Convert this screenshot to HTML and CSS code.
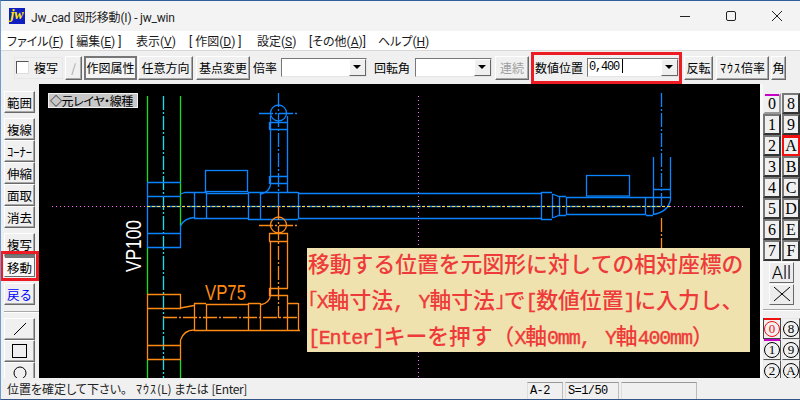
FILE: index.html
```html
<!DOCTYPE html>
<html lang="ja">
<head>
    <meta charset="UTF-8">
    <title>Jw_cad 図形移動(I) - jw_win</title>
    <link rel="stylesheet" href="styles.css">
</head>
<body>
    <div class="window">
        <div class="titlebar">
            <span class="app-icon">jw</span>
            <span class="title-text">Jw_cad 図形移動(I) - jw_win</span>
            <div class="win-controls">
                <svg width="10" height="10" viewBox="0 0 10 10"><path d="M0 5.5H10" stroke="#222" fill="none"/></svg>
                <svg width="10" height="10" viewBox="0 0 10 10"><rect x=".5" y=".5" width="9" height="9" rx="1.5" stroke="#222" fill="none"/></svg>
                <svg width="10" height="10" viewBox="0 0 10 10"><path d="M0 0L10 10M10 0L0 10" stroke="#222" fill="none"/></svg>
            </div>
        </div>

        <div class="menubar">
            <span class="menu m1">ファイル(<u>F</u>)</span>
            <span class="menu m2">[ 編集(<u>E</u>) ]</span>
            <span class="menu m3">表示(<u>V</u>)</span>
            <span class="menu m4">[ 作図(<u>D</u>) ]</span>
            <span class="menu m5">設定(<u>S</u>)</span>
            <span class="menu m6">[その他(<u>A</u>)]</span>
            <span class="menu m7">ヘルプ(<u>H</u>)</span>
        </div>

        <div class="toolbar">
            <label class="check-group"><span class="checkbox"></span>複写</label>
            <button class="btn slash">/</button>
            <button class="btn active w-attr">作図属性</button>
            <button class="btn w-free">任意方向</button>
            <button class="btn w-base">基点変更</button>
            <span class="tool-label l-scale">倍率</span>
            <div class="combo c-scale"><span class="combo-value"></span><span class="combo-arrow"></span></div>
            <span class="tool-label l-rot">回転角</span>
            <div class="combo c-rot"><span class="combo-value"></span><span class="combo-arrow"></span></div>
            <button class="btn disabled w-cont">連続</button>
            <div class="highlight-group">
                <span class="tool-label">数値位置</span>
                <div class="combo c-num"><span class="combo-value">0,400<i class="caret"></i></span><span class="combo-arrow"></span></div>
            </div>
            <button class="btn w-flip">反転</button>
            <button class="btn w-mouse"><span class="kana">ﾏｳｽ</span>倍率</button>
            <button class="btn w-angle">角</button>
        </div>

        <div class="main">
            <div class="left-panel">
                <button class="side-btn">範囲</button>
                <div class="side-group">
                    <button class="side-btn">複線</button>
                    <button class="side-btn">ｺｰﾅｰ</button>
                    <button class="side-btn">伸縮</button>
                    <button class="side-btn">面取</button>
                    <button class="side-btn">消去</button>
                </div>
                <div class="side-group">
                    <button class="side-btn">複写</button>
                    <button class="side-btn current">移動</button>
                </div>
                <button class="side-btn back">戻る</button>
                <div class="side-sep"></div>
                <div class="side-group">
                    <button class="side-btn"><svg width="14" height="14" viewBox="0 0 14 14"><path d="M1 13L13 1" stroke="#000" fill="none"/></svg></button>
                    <button class="side-btn"><svg width="15" height="14" viewBox="0 0 15 14"><rect x=".5" y=".5" width="14" height="13" stroke="#000" fill="none"/></svg></button>
                    <button class="side-btn"><svg width="14" height="14" viewBox="0 0 14 14"><circle cx="7" cy="7" r="6" stroke="#000" fill="none"/></svg></button>
                </div>
            </div>

            <div class="canvas">
                <svg class="drawing" width="721" height="294" viewBox="39 84 721 294" fill="none">
                    <path class="dots" d="M52 206.5H147M670 206.5H746M418.5 96V378"/>
                    <path class="green" d="M147.5 96V182M180.5 96V226M147.5 247V294M147.5 359V378M180.5 359V378"/>
                    <path class="cyan" d="M163.5 96V378"/>

                    <!-- blue pipe -->
                    <g class="blue">
                        <path d="M147.5 182V247M180.5 226V247M147 182.5H181M147 196.5H181M147 233.5H181M147 247.5H181"/>
                        <path d="M180.5 194L185 192.5H194M180.5 226Q184 218 195 217.5M260 194.5Q270 192 270.5 184"/>
                        <path d="M194.5 192V219M194 192.5H206M194 218.5H206M206.5 192V219M206 193.5H248M206 218.5H248M248.5 192V219"/>
                        <path d="M248 192.5H260M248 219.5H260M260.5 192V219M260 192.5H298M260 219.5H298M287.5 184V193M298.5 192V219"/>
                        <path d="M298 193.5H541M298 218.5H541M541.5 192V219M541 192.5H552M541 219.5H552M552.5 194V218"/>
                        <path d="M552.5 194L559 196.5H566M552.5 218L559 215.5H566"/>
                        <path d="M559.5 196V216M566.5 197V215M566 197.5H653M566 214.5H646M645.5 197V215M646 215.5H653M653.5 157V215M670.5 157V197M653 189.5H671M653 197.5H671"/>
                        <path d="M670.5 197V200Q668 212 653 214.5"/>
                        <rect x="205.5" y="170.5" width="42" height="21"/>
                        <rect x="586.5" y="175.5" width="43" height="20.5"/>
                        <path d="M270.5 116V184M287.5 116V184M270 122.5H288M270 129.5H288M270 176.5H288M270 183.5H288M269.5 122V130M269.5 176V184"/>
                        <circle cx="278.5" cy="113" r="8"/>
                        <path class="center" d="M259 113.5H299M278.5 93V206M661.5 93V206M147 206.5H670"/>
                    </g>
                    <path class="center-yb" d="M147 206.5H670"/>

                    <!-- orange pipe -->
                    <g class="orange">
                        <path d="M147.5 294V359M180.5 294V308M180.5 340V359M147 294.5H181M147 308.5H181M147 345.5H181M147 359.5H181"/>
                        <path d="M180.5 308L194 305.5M180.5 340Q184 330 194 330M270.5 295Q270 303 260 305"/>
                        <path d="M194 303.5H206M194.5 303V330M206.5 304V330M206 304.5H248M248.5 303V330M248 303.5H260M260.5 303V330M194 330.5H300M287.5 295V330M287 303.5H298M298.5 303V330"/>
                        <path d="M270.5 241V295M287.5 241V288M269 288.5H288M269 295.5H288M269.5 288V296M269.5 233V241M287.5 233V241M269 233.5H288M269 241.5H288"/>
                        <circle cx="278.5" cy="225" r="8"/>
                        <path class="center" d="M259 225.5H299M278.5 206V318M163 317.5H297M661.5 218V248"/>
                    </g>

                    <text class="vp100" transform="translate(141 272) rotate(-90)" textLength="52" lengthAdjust="spacingAndGlyphs">VP100</text>
                    <text class="vp75" x="205" y="300" textLength="41" lengthAdjust="spacingAndGlyphs">VP75</text>
                </svg>

                <div class="layer-tag">◇元レイヤ・線種</div>
                <div class="note">
                    <div class="note-line">移動する位置を元図形に対しての相対座標の</div>
                    <div class="note-line"><span class="lat">｢X</span>軸寸法<span class="lat">, Y</span>軸寸法<span class="lat">｣</span>で<span class="lat">[</span>数値位置<span class="lat">]</span>に入力し、</div>
                    <div class="note-line"><span class="lat">[Enter]</span>キーを押す（<span class="lat">X</span>軸<span class="lat">0mm, Y</span>軸<span class="lat">400mm</span>）</div>
                </div>
            </div>

            <div class="right-panel">
                <div class="key-grid">
                    <button class="key bar-purple">0</button><button class="key">8</button>
                    <button class="key">1</button><button class="key">9</button>
                    <button class="key">2</button><button class="key key-on">A</button>
                    <button class="key">3</button><button class="key">B</button>
                    <button class="key">4</button><button class="key">C</button>
                    <button class="key">5</button><button class="key">D</button>
                    <button class="key">6</button><button class="key">E</button>
                    <button class="key">7</button><button class="key">F</button>
                </div>
                <button class="all-btn">All</button>
                <button class="all-btn"><svg width="16" height="14" viewBox="0 0 16 14"><path d="M0 0L8 7L0 14M16 0L8 7L16 14" stroke="#000" fill="none"/></svg></button>
                <div class="side-sep"></div>
                <div class="key-grid">
                    <button class="key round bar-red red-mark"><span class="ring">0</span></button><button class="key round"><span class="ring">8</span></button>
                    <button class="key round bar-purple"><span class="ring">1</span></button><button class="key round"><span class="ring">9</span></button>
                    <button class="key round"><span class="ring">2</span></button><button class="key round"><span class="ring">A</span></button>
                </div>
            </div>
        </div>

        <div class="statusbar">
            <span class="status-text">位置を確定して下さい。<span class="kana status-kana">ﾏｳｽ</span>(L) または <span class="status-key">[Enter]</span></span>
            <span class="status-cell s-layer">A-2</span>
            <span class="status-cell s-scale">S=1/50</span>
            <span class="status-cell s-blank"></span>
        </div>
    </div>
</body>
</html>
```

FILE: styles.css
```css
* { box-sizing: border-box; }

html, body {
    margin: 0;
    height: 400px;
    overflow: hidden;
}

body {
    font-family: "Noto Sans CJK JP", "Noto Sans", sans-serif;
    font-size: 12px;
    color: #000;
    background: #f0f0f0;
}

button {
    font: inherit;
    margin: 0;
    padding: 0;
    color: inherit;
}

.window {
    width: 800px;
    height: 400px;
    display: flex;
    flex-direction: column;
    border-top: 1px solid #2f5f9e;
    border-left: 1px solid #6f9bd0;
    border-bottom: 1px solid #34558a;
}

/* title bar */
.titlebar {
    height: 30px;
    flex: none;
    display: flex;
    align-items: center;
    background: #f3f3f3;
    padding-left: 8px;
}
.app-icon {
    width: 16px;
    height: 16px;
    background: #1020c0;
    color: #ffe800;
    font: italic bold 14px/14px "Liberation Serif", serif;
    text-align: center;
}
.title-text {
    margin-left: 6px;
    font-family: Roboto, "Noto Sans CJK JP", sans-serif;
    font-size: 12px;
    letter-spacing: -.2px;
    color: #222;
    white-space: nowrap;
}
.win-controls {
    margin-left: auto;
    display: flex;
    gap: 36px;
    padding-right: 18px;
}

/* menu */
.menubar {
    height: 19px;
    flex: none;
    display: flex;
    align-items: center;
    background: #fff;
    white-space: nowrap;
}
.menu {
    color: #1a1a1a;
    font-family: Roboto, "Noto Sans CJK JP", sans-serif;
    font-feature-settings: "palt";
}
.m1 { margin-left: 6px; width: 63px; }
.m2 { width: 66px; }
.m3 { width: 53px; }
.m4 { width: 68px; }
.m5 { width: 52px; }
.m6 { width: 69px; }

/* toolbar */
.toolbar {
    height: 34px;
    flex: none;
    display: flex;
    align-items: center;
    border-top: 1px solid #d8d8d8;
    background: #f0f0f0;
    white-space: nowrap;
}
.check-group {
    width: 49px;
    height: 22px;
    margin-left: 13px;
    display: flex;
    align-items: center;
    border: 1px solid #e6e6e6;
    padding-left: 1px;
}
.checkbox {
    width: 13px;
    height: 13px;
    margin-right: 5px;
    background: #fff;
    border: 1px solid #555;
    border-right-color: #ddd;
    border-bottom-color: #ddd;
}
.btn {
    height: 24px;
    flex: none;
    background: #f0f0f0;
    border: 1px solid;
    border-color: #fff #696969 #696969 #fff;
    box-shadow: inset -1px -1px #a8a8a8;
    text-align: center;
}
.btn.active {
    border: 2px solid #777;
    background: #f4f4f4;
    box-shadow: none;
}
.btn.disabled, .slash { color: #a0a0a0; }
.slash { width: 17px; margin-left: 2px; }
.w-attr { width: 53px; margin-left: 2px; }
.w-free { width: 55px; margin-left: 1px; }
.w-base { width: 54px; margin-left: 3px; }
.tool-label { flex: none; }
.l-scale { margin-left: 3px; }
.l-rot { margin-left: 7px; }
.combo {
    height: 19px;
    flex: none;
    display: flex;
    justify-content: space-between;
    background: #fff;
    border: 1px solid;
    border-color: #777 #e4e4e4 #e4e4e4 #777;
}
.c-scale { width: 86px; margin-left: 4px; }
.c-rot { width: 77px; margin-left: 5px; }
.c-num { width: 92px; margin-left: 4px; }
.combo-value {
    font: 12px/17px "Liberation Mono", monospace;
    padding-left: 1px;
    letter-spacing: -1.2px;
}
.caret {
    display: inline-block;
    width: 1px;
    height: 14px;
    margin-left: 3px;
    background: #000;
    vertical-align: -3px;
}
.combo-arrow {
    width: 17px;
    position: relative;
    background: #f0f0f0;
    border: 1px solid;
    border-color: #fff #666 #666 #fff;
}
.combo-arrow::after {
    content: "";
    position: absolute;
    left: 3px;
    top: 5px;
    border: 4px solid transparent;
    border-top: 4px solid #000;
    border-bottom: 0;
}
.w-cont { width: 34px; margin-left: 3px; }
.highlight-group {
    width: 151px;
    height: 32px;
    margin-left: 2px;
    flex: none;
    display: flex;
    align-items: center;
    padding-left: 1px;
    border: 3px solid #ed1c24;
}
.w-flip { width: 29px; margin-left: 2px; }
.w-mouse { width: 53px; margin-left: 3px; }
.w-angle { width: 15px; margin-left: 2px; }
.kana { letter-spacing: 1px; }

/* main area */
.main {
    flex: 1;
    min-height: 0;
    display: flex;
    overflow: hidden;
}

.left-panel {
    width: 38px;
    flex: none;
    display: flex;
    flex-direction: column;
    padding: 7px 0 0 3px;
    gap: 5px;
    overflow: hidden;
}
.side-group { display: flex; flex-direction: column; flex: none; }
.side-btn {
    width: 31px;
    height: 22px;
    flex: none;
    display: flex;
    align-items: center;
    justify-content: center;
    background: #f0f0f0;
    border: 1px solid;
    border-color: #fff #696969 #696969 #fff;
    box-shadow: inset -1px -1px #a8a8a8;
    font-size: 12.5px;
}
.side-btn.current {
    position: relative;
    outline: 3px solid #ed1c24;
    outline-offset: 1px;
    background: #f8f8f8;
    border-top: 3px solid #777;
    box-shadow: none;
}
.side-btn.back { color: #0000ff; margin-top: 1px; }
.side-sep {
    height: 2px;
    flex: none;
    margin: 1px 0 0;
    border-top: 1px solid #a8a8a8;
    border-bottom: 1px solid #fff;
}

.canvas {
    width: 721px;
    flex: none;
    position: relative;
    background: #000;
    overflow: hidden;
}
.drawing { display: block; stroke-width: 1.3; }
.dots { stroke: #ff66ff; stroke-width: 1; stroke-dasharray: 1 3; }
.green { stroke: #16e016; }
.cyan { stroke: #10e0f0; stroke-dasharray: 14 2 2 2; }
.blue { stroke: #0a84ff; }
.orange { stroke: #ff8a14; }
.center { stroke-dasharray: 14 2 2 2; }
.center-yb { stroke: #ffd83a; stroke-width: 1; stroke-dasharray: 3 2; }
.vp100, .vp75 {
    font-family: "Liberation Sans", sans-serif;
    font-size: 22px;
    stroke: none;
}
.vp100 { fill: #fff; }
.vp75 { fill: #ff8a14; }

.layer-tag {
    position: absolute;
    left: 9px;
    top: 9px;
    height: 15px;
    width: 90px;
    padding-left: 1px;
    background: #c8c8c8;
    border: 1px solid #f0f0f0;
    font-size: 12px;
    font-feature-settings: "palt";
    letter-spacing: -.4px;
    line-height: 13px;
    white-space: nowrap;
}

.note {
    position: absolute;
    left: 268px;
    top: 164px;
    width: 443px;
    height: 104px;
    background: #efe2ae;
    color: #ee3a3a;
    padding-left: 1px;
    font-size: 21.8px;
    font-weight: 500;
    white-space: nowrap;
}
.note-line { height: 36px; line-height: 30px; }
.lat {
    font-family: "Liberation Mono", monospace;
    font-size: 20px;
    letter-spacing: -1.2px;
    word-spacing: 4px;
    -webkit-text-stroke: .4px #ee3a3a;
}

.right-panel {
    flex: 1;
    display: flex;
    flex-direction: column;
    align-items: center;
    padding-top: 9px;
    overflow: hidden;
    background: #f0f0f0;
    border-left: 3px solid #f8f8f8;
}
.key-grid {
    display: grid;
    grid-template-columns: 18px 18px;
    grid-auto-rows: 21px;
    column-gap: 1px;
    width: 37px;
    flex: none;
}
.key {
    position: relative;
    background: #f0f0f0;
    border: 2px solid;
    border-color: #777 #333 #333 #777;
    font: 16px/16px "Liberation Serif", serif;
    text-align: center;
}
.key.bar-purple, .key.bar-red { border-color: #f0f0f0 #999 #999 #f0f0f0; }
.key.bar-purple::before, .key.bar-red::before {
    content: "";
    position: absolute;
    left: 0;
    right: 0;
    top: -1px;
    height: 2px;
    background: #c800c8;
}
.key.bar-red::before { background: #f01010; }
.key.key-on { border: 2px solid #f01010; border-top-width: 3px; }
.key.round {
    display: flex;
    align-items: center;
    justify-content: center;
    border: 1px solid;
    border-color: #e8e8e8 #555 #555 #e8e8e8;
}
.ring {
    width: 16px;
    height: 16px;
    flex: none;
    border: 1.5px solid currentColor;
    border-radius: 50%;
    font: 13px/13px "Liberation Serif", serif;
    text-align: center;
}
.key.red-mark { color: #f01010; border-color: #444; }
.all-btn {
    width: 25px;
    height: 21px;
    flex: none;
    margin-top: 1px;
    background: #ececec;
    border: 1px solid;
    border-color: #fff #696969 #696969 #fff;
    font: 300 18px/18px Roboto, sans-serif;
}
.key-grid + .all-btn { margin-top: 1px; }
.right-panel .side-sep { width: 100%; margin: 4px 0 7px; }

/* status bar */
.statusbar {
    height: 21px;
    flex: none;
    display: flex;
    align-items: center;
    background: #f0f0f0;
    white-space: nowrap;
}
.status-text {
    width: 526px;
    padding-left: 6px;
    flex: none;
    color: #222;
    font-feature-settings: "palt";
}
.status-kana { margin-left: 9px; }
.status-key { letter-spacing: -.4px; }
.status-cell {
    height: 17px;
    margin-top: 3px;
    flex: none;
    padding-left: 2px;
    border-top: 1px solid #999;
    border-right: 1px solid #bbb;
    border-left: 1px solid #ddd;
    font-family: "Liberation Mono", monospace;
    line-height: 16px;
    letter-spacing: -.6px;
}
.s-layer { width: 36px; }
.s-scale { width: 54px; margin-left: 2px; }
.s-blank { width: 76px; margin-left: 2px; }
```
